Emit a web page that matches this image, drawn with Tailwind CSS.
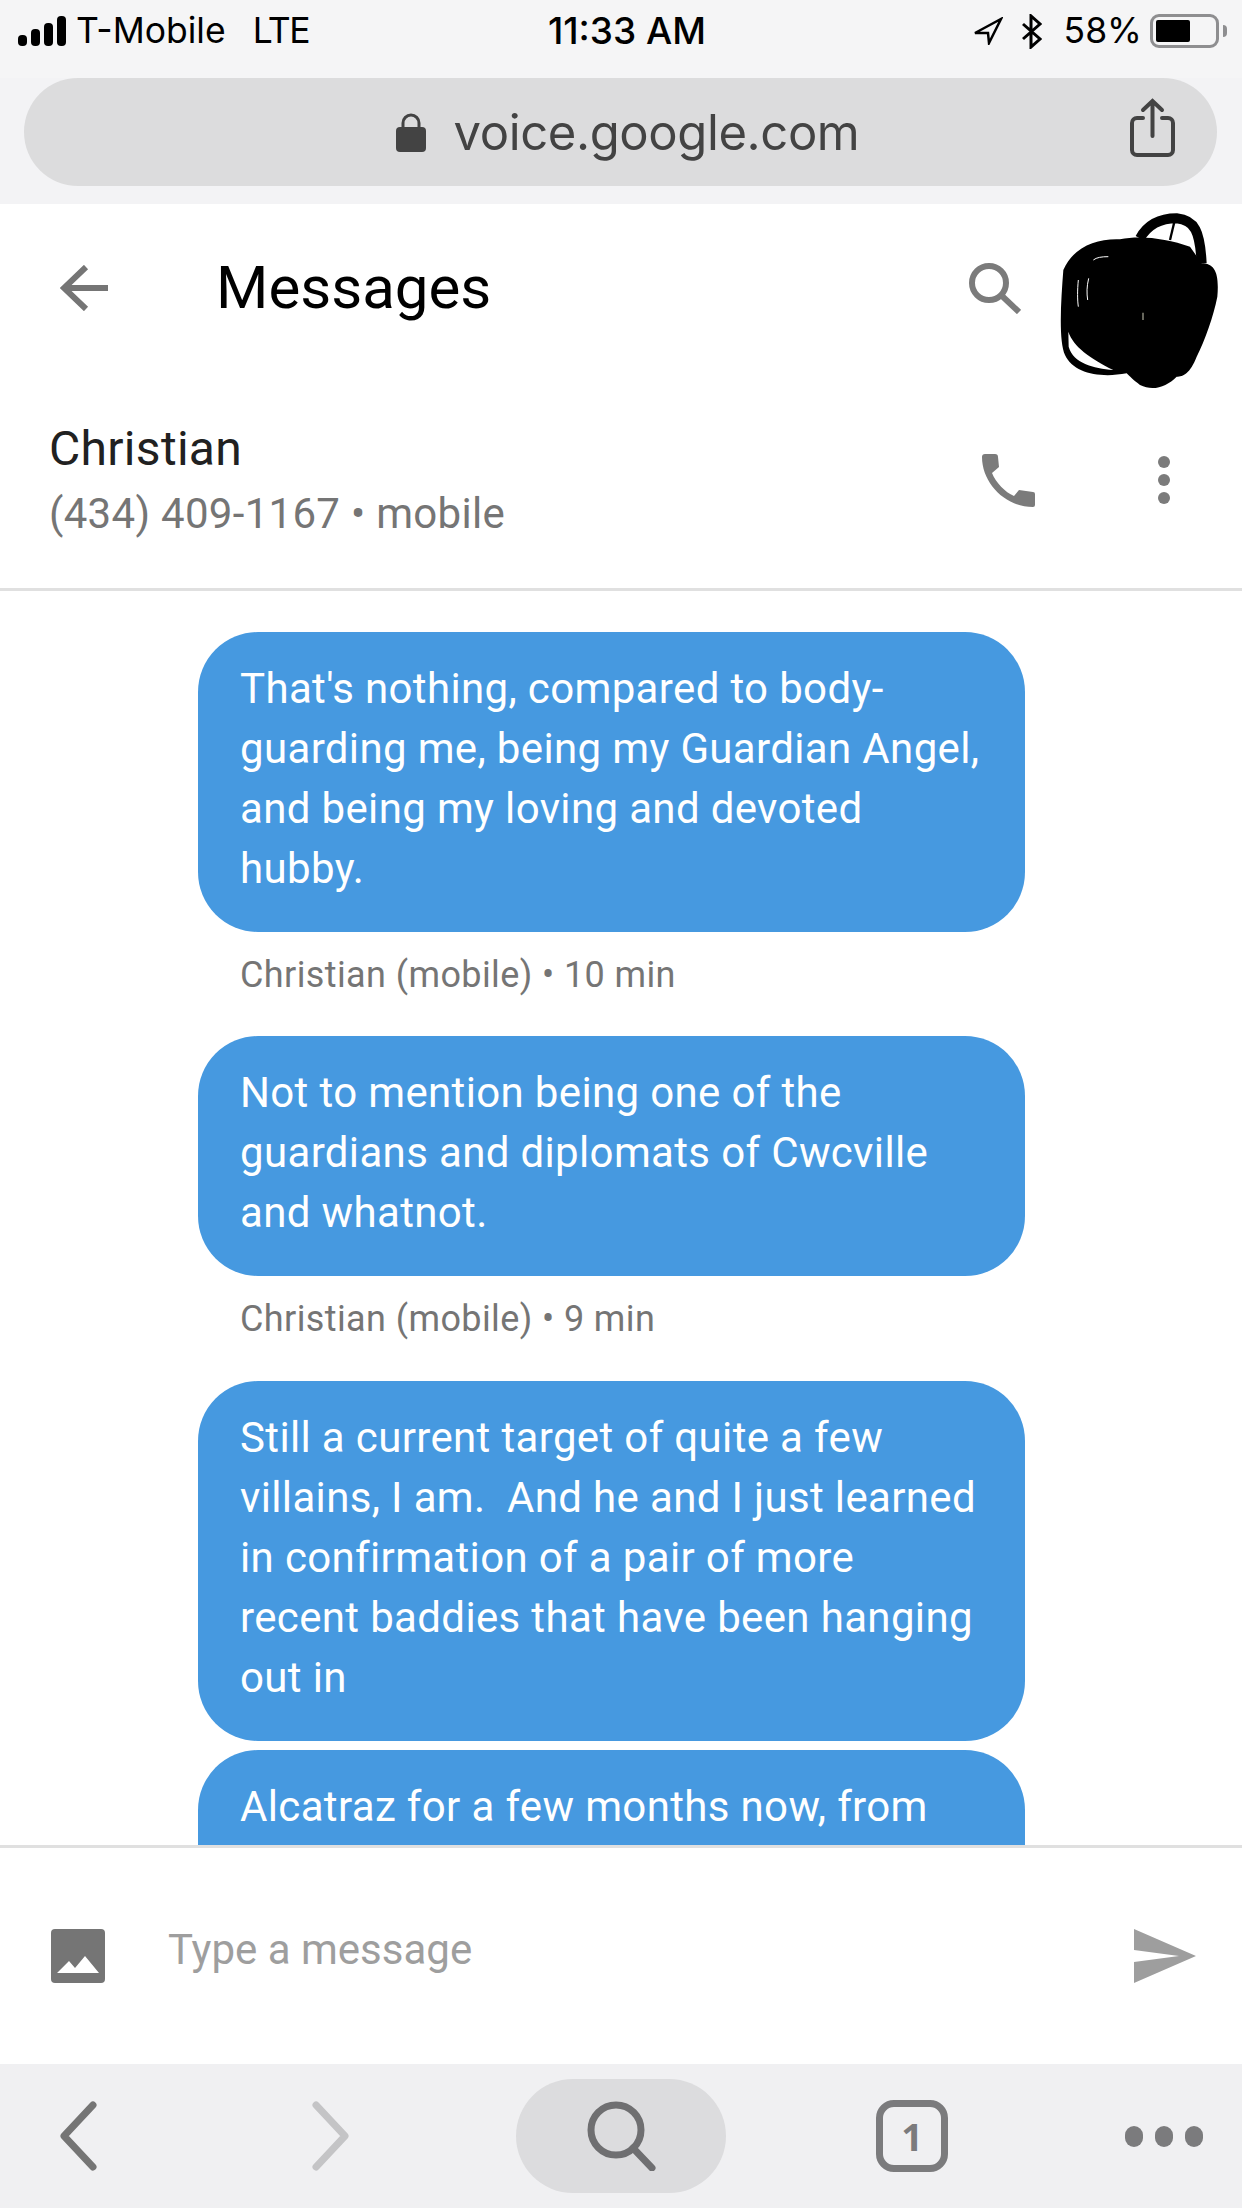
<!DOCTYPE html>
<html lang="en">
<head>
  <meta charset="UTF-8" />
  <title>Messages - Google Voice</title>
  <script src="https://cdn.jsdelivr.net/npm/@tailwindcss/browser@4"></script>
</head>
<body class="bg-white">
  <div class="relative w-[1242px] h-[2208px] overflow-hidden flex flex-col font-['Roboto',sans-serif]">

    <!-- iOS status bar -->
    <div class="h-[78px] shrink-0 bg-[#f5f5f6] flex items-center justify-between pl-[18px] pr-[15px] pb-[16px] font-['Inter',sans-serif] text-[35.5px] text-black">
      <div class="flex items-center w-[400px]">
        <svg class="w-[48px] h-[30px] fill-black" viewBox="0 0 48 30">
          <rect x="0" y="19" width="9" height="11" rx="4"/>
          <rect x="13" y="13" width="9" height="17" rx="4"/>
          <rect x="26" y="7" width="9" height="23" rx="4"/>
          <rect x="39" y="0" width="9" height="30" rx="4"/>
        </svg>
        <span class="ml-[10px]">T-Mobile</span>
        <span class="ml-[27px] tracking-[-1.5px]">LTE</span>
      </div>
      <span class="font-medium text-[37px] ml-[9px]">11:33 AM</span>
      <div class="flex items-center justify-end w-[400px]">
        <svg class="w-[30px] h-[28px] mr-[18px]" viewBox="0 0 30 28" fill="none" stroke="black" stroke-width="2.5">
          <path d="M2 16 L28 2 L16 26 L15 16 Z"/>
        </svg>
        <svg class="w-[21px] h-[35px] mr-[22px]" viewBox="0 0 21 35" fill="none" stroke="black" stroke-width="3">
          <path d="M2 10 L19 25 L10 33 L10 2 L19 10 L2 25"/>
        </svg>
        <span>58%</span>
        <div class="ml-[8px] w-[69px] h-[34px] border-[3px] border-[#8e8e90] rounded-[9px] p-[3px]">
          <div class="w-[34px] h-full bg-black rounded-[2px]"></div>
        </div>
        <div class="ml-[4px] w-[4px] h-[12px] bg-[#8e8e90] rounded-r-full"></div>
      </div>
    </div>

    <!-- Safari address bar -->
    <div class="h-[126px] shrink-0 bg-[#f3f3f5] px-[24px]">
      <div class="relative h-[108px] w-[1193px] rounded-[54px] bg-[#dcdcdd] flex items-center justify-center pl-[14px]">
        <svg class="w-[30px] h-[39px] mr-[28px]" viewBox="0 0 30 39">
          <path d="M7 16 V10 a8 8 0 0 1 16 0 V16" fill="none" stroke="#434343" stroke-width="3"/>
          <rect x="0" y="14" width="30" height="25" rx="4" fill="#434343"/>
        </svg>
        <span class="pt-[2px] font-['Inter',sans-serif] text-[49px] text-[#434343] tracking-[-0.4px]">voice.google.com</span>
        <svg class="absolute right-[42px] top-[20px] w-[45px] h-[59px]" viewBox="0 0 45 59" fill="none" stroke="#434343" stroke-width="4" stroke-linecap="round">
          <path d="M13 20 H7 a5 5 0 0 0 -5 5 V52 a5 5 0 0 0 5 5 H38 a5 5 0 0 0 5 -5 V25 a5 5 0 0 0 -5 -5 H32"/>
          <path d="M22.5 38 V3 M13 12 L22.5 3 L32 12"/>
        </svg>
      </div>
    </div>

    <!-- Messages header -->
    <header class="h-[168px] shrink-0 bg-white flex items-center pl-[60px] pr-[221px]">
      <svg class="w-[48px] h-[46px]" viewBox="0 0 48 46" fill="none" stroke="#757575" stroke-width="6">
        <path d="M26 2 L4 23 L26 44 M4 23 H48"/>
      </svg>
      <h1 class="ml-[108px] text-[60px] leading-none text-black flex-1">Messages</h1>
      <svg class="w-[52px] h-[51px]" viewBox="0 0 52 51" fill="none" stroke="#7b7b7b" stroke-width="6">
        <circle cx="20" cy="20" r="17"/>
        <path d="M32 32 L50 49"/>
      </svg>
    </header>

    <!-- Avatar, scribbled out -->
    <svg class="absolute left-[900px] top-[200px] w-[342px] h-[340px]" viewBox="0 0 1026 1020">
      <path d="M720 115 C745 70 785 55 830 55 C885 60 900 95 905 190" fill="none" stroke="black" stroke-width="30"/>
      <path d="M828 45 L810 120" stroke="black" stroke-width="7"/>
      <path d="M490 210 C520 140 590 115 660 118 C720 105 800 115 870 140 L905 190 C945 190 958 220 952 290 C940 350 915 420 890 470 C870 520 850 530 830 530 C800 560 760 575 720 555 C700 540 690 530 680 520 C600 535 520 520 495 465 C475 420 483 300 490 210 Z" fill="black"/>
      <path d="M505 395 C520 440 570 475 640 510 C580 505 520 490 506 440 Z" fill="white"/>
      <path d="M535 240 C532 270 532 300 535 320 M566 235 C560 260 560 280 563 300 M580 180 C590 172 605 170 625 170" fill="none" stroke="white" stroke-width="3"/>
      <path d="M729 338 V360" stroke="#9a9a8a" stroke-width="4"/>
    </svg>

    <!-- Contact row -->
    <div class="h-[219px] shrink-0 bg-white border-b-[3px] border-[#e0e0e0] flex items-start pl-[49px] pr-[69px] pt-[49px]">
      <div class="flex-1 tracking-[0.3px]">
        <div class="text-[48px] leading-[56px] text-[#212121]">Christian</div>
        <div class="text-[42px] leading-[50px] mt-[12px] text-[#757575]">(434) 409-1167 • mobile</div>
      </div>
      <svg class="w-[54px] h-[54px] mt-[32px]" viewBox="0 0 54 54" fill="#7b7b7b">
        <path d="M1 4 a3 3 0 0 1 3 -3 H14 a3 3 0 0 1 3 3 L18 14 L11 20 C15 30 24 39 33 43 L38 37 L52 39 a2 2 0 0 1 2 2 V52 a2 2 0 0 1 -2 2 C24 54 1 30 1 4 Z"/>
      </svg>
      <div class="ml-[120px] mt-[32px] w-[18px] flex flex-col">
        <div class="w-[12px] h-[12px] m-[3px] rounded-full bg-[#7b7b7b]"></div>
        <div class="w-[12px] h-[12px] m-[3px] rounded-full bg-[#7b7b7b]"></div>
        <div class="w-[12px] h-[12px] m-[3px] rounded-full bg-[#7b7b7b]"></div>
      </div>
    </div>

    <!-- Conversation -->
    <main class="flex-1 min-h-0 overflow-hidden bg-white pl-[198px] pt-[41px]">
      <div class="w-[827px] rounded-[60px] bg-[#4699e0] pl-[42px] pt-[27px] pb-[33px] text-[42px] leading-[60px] tracking-[0.35px] text-white whitespace-nowrap">
        That's nothing, compared to body-<br>guarding me, being my Guardian Angel,<br>and being my loving and devoted<br>hubby.
      </div>
      <div class="pl-[42px] h-[104px] pt-[21px] text-[36px] leading-[44px] tracking-[0.4px] text-[#757575]">Christian (mobile) • 10 min</div>

      <div class="w-[827px] rounded-[60px] bg-[#4699e0] pl-[42px] pt-[27px] pb-[33px] text-[42px] leading-[60px] tracking-[0.35px] text-white whitespace-nowrap">
        Not to mention being one of the<br>guardians and diplomats of Cwcville<br>and whatnot.
      </div>
      <div class="pl-[42px] h-[105px] pt-[21px] text-[36px] leading-[44px] tracking-[0.4px] text-[#757575]">Christian (mobile) • 9 min</div>

      <div class="w-[827px] rounded-[60px] bg-[#4699e0] pl-[42px] pt-[27px] pb-[33px] text-[42px] leading-[60px] tracking-[0.35px] text-white whitespace-nowrap">
        Still a current target of quite a few<br>villains, I am.&nbsp; And he and I just learned<br>in confirmation of a pair of more<br>recent baddies that have been hanging<br>out in
      </div>
      <div class="mt-[9px] w-[827px] rounded-[60px] bg-[#4699e0] pl-[42px] pt-[27px] pb-[33px] text-[42px] leading-[60px] tracking-[0.35px] text-white whitespace-nowrap">
        Alcatraz for a few months now, from<br>&nbsp;
      </div>
    </main>

    <!-- Compose box -->
    <div class="h-[219px] shrink-0 bg-white border-t-[3px] border-[#e0e0e0] flex items-center pl-[51px] pr-[46px] pb-[24px]">
      <svg class="w-[54px] h-[54px] mt-[24px]" viewBox="0 0 54 54">
        <rect width="54" height="54" rx="4" fill="#757575"/>
        <path d="M6 44 L18 32 L24 39 L34 27 L48 44 Z" fill="white"/>
      </svg>
      <span class="ml-[63px] mt-[12px] flex-1 text-[42px] leading-none text-[#9e9e9e]">Type a message</span>
      <svg class="w-[62px] h-[54px] mt-[24px]" viewBox="0 0 62 54" fill="#9e9e9e">
        <path d="M0 0 L62 27 L0 54 V33 L45 27 L0 21 Z"/>
      </svg>
    </div>

    <!-- Safari toolbar -->
    <div class="h-[144px] shrink-0 bg-[#f0f0f2] flex items-center pl-[60px] pr-[39px]">
      <svg class="w-[38px] h-[70px]" viewBox="0 0 38 70" fill="none" stroke="#757575" stroke-width="7" stroke-linecap="round" stroke-linejoin="round">
        <path d="M33 4 L4 35 L33 66"/>
      </svg>
      <svg class="ml-[213px] w-[38px] h-[70px]" viewBox="0 0 38 70" fill="none" stroke="#c4c4c6" stroke-width="7" stroke-linecap="round" stroke-linejoin="round">
        <path d="M5 4 L34 35 L5 66"/>
      </svg>
      <div class="ml-[167px] w-[210px] h-[114px] rounded-[57px] bg-[#dcdcde] flex items-center justify-center">
        <svg class="w-[70px] h-[70px]" viewBox="0 0 70 70" fill="none" stroke="#6f6f71" stroke-width="7" stroke-linecap="round">
          <circle cx="30" cy="29" r="25"/>
          <path d="M47 47 L66 67"/>
        </svg>
      </div>
      <div class="ml-[150px] w-[72px] h-[72px] rounded-[18px] border-[7px] border-[#7b7b7d] flex items-center justify-center font-['Open_Sans',sans-serif] font-bold text-[38px] leading-none text-[#7b7b7d]">1</div>
      <div class="ml-auto flex items-center gap-[12px]">
        <div class="w-[18px] h-[21px] rounded-full bg-[#7b7b7d]"></div>
        <div class="w-[18px] h-[21px] rounded-full bg-[#7b7b7d]"></div>
        <div class="w-[18px] h-[21px] rounded-full bg-[#7b7b7d]"></div>
      </div>
    </div>
  </div>
</body>
</html>
